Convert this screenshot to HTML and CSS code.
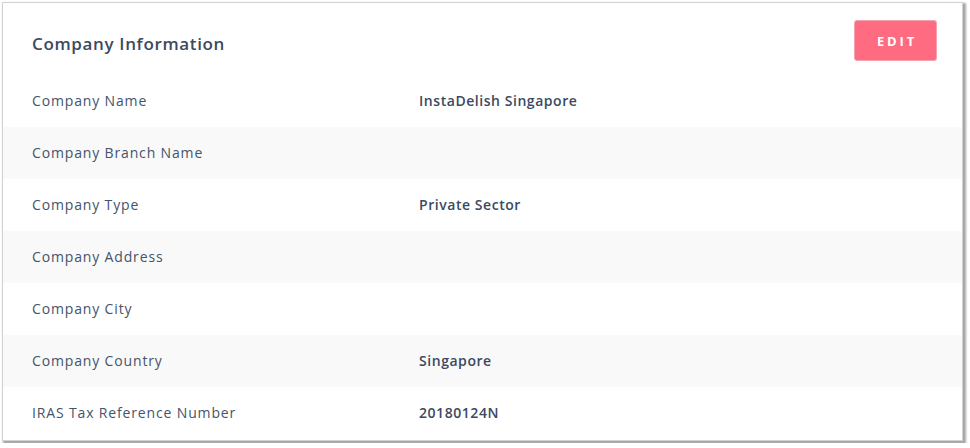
FILE: index.html
```html
<!DOCTYPE html>
<html>
<head>
<meta charset="utf-8">
<link rel="stylesheet" href="styles.css">
</head>
<body>
<div class="card">
  <div class="header">
    <h2 class="title">Company Information</h2>
    <button class="edit">EDIT</button>
  </div>
  <div class="row"><span class="label">Company Name</span><span class="value">InstaDelish Singapore</span></div>
  <div class="row alt"><span class="label">Company Branch Name</span><span class="value"></span></div>
  <div class="row"><span class="label">Company Type</span><span class="value">Private Sector</span></div>
  <div class="row alt"><span class="label">Company Address</span><span class="value"></span></div>
  <div class="row"><span class="label">Company City</span><span class="value"></span></div>
  <div class="row alt"><span class="label">Company Country</span><span class="value">Singapore</span></div>
  <div class="row"><span class="label">IRAS Tax Reference Number</span><span class="value">20180124N</span></div>
</div>
</body>
</html>
```
FILE: styles.css
```css
html, body { margin: 0; padding: 0; background: #ffffff; }
body { padding: 2px; font-family: "Open Sans", "Noto Sans", sans-serif; color: #3e4c60; }
.card {
  width: 959px;
  height: 437px;
  border: 1px solid #d2d2d2;
  box-shadow: 2px 2px 2px 1px rgba(0,0,0,0.35);
  background: #fff;
  display: flex;
  flex-direction: column;
}
.header {
  height: 64px;
  padding: 8px 25px 0 29px;
  display: flex;
  align-items: center;
  justify-content: space-between;
}
.title { margin: 0; font-size: 17px; font-weight: 600; letter-spacing: 0.65px; color: #3b4a5f; }
.edit {
  width: 83px; height: 41px;
  background: #ff6b81;
  border: 1px solid #f2a3ae;
  border-radius: 3px;
  color: #fff;
  font-family: inherit;
  font-size: 13px;
  font-weight: 700;
  letter-spacing: 2.8px;
  padding: 0 0 0 3px;
  margin-top: -5px;
}
.row {
  height: 50px;
  padding: 0 0 2px 29px;
  display: flex;
  align-items: center;
  font-size: 14px;
}
.row.alt { background: #f9f9f9; }
.label { width: 387px; color: #44546a; letter-spacing: 0.85px; }
.value { font-weight: 600; color: #3b4a5f; letter-spacing: 0.55px; }
```
